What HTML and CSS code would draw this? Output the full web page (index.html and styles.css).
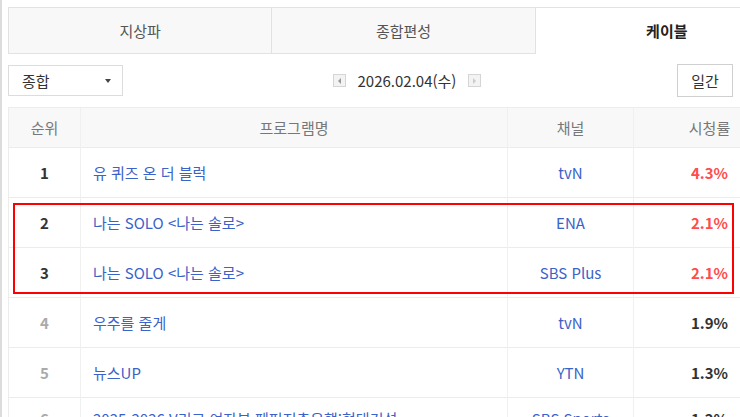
FILE: index.html
```html
<!DOCTYPE html>
<html lang="ko">

<head>
    <meta charset="UTF-8">
    <meta name="viewport" content="width=device-width, initial-scale=1.0">
    <title>시청률 순위</title>

    <link rel="stylesheet" href="styles.css">
</head>

<body>

    <div class="page">
        <!-- Broadcast type tabs -->
        <ul class="tabs">
            <li class="tab">지상파</li>
            <li class="tab">종합편성</li>
            <li class="tab active">케이블</li>
        </ul>

        <!-- Filter / date controls -->
        <div class="controls">
            <div class="select-box">
                <span>종합</span>
                <span class="caret"></span>
            </div>
            <div class="date-nav">
                <span class="nav-btn prev"></span>
                <span class="date">2026.02.04(수)</span>
                <span class="nav-btn next"></span>
            </div>
            <div class="period">
                <button class="period-btn">일간</button>
            </div>
        </div>

        <!-- Ratings table -->
        <div class="table-wrap">
            <table class="ratings">
                <colgroup>
                    <col class="c-rank">
                    <col class="c-prog">
                    <col class="c-chan">
                    <col class="c-rate">
                </colgroup>
                <thead>
                    <tr>
                        <th>순위</th>
                        <th>프로그램명</th>
                        <th>채널</th>
                        <th class="rate">시청률</th>
                    </tr>
                </thead>
                <tbody>
                    <tr class="top">
                        <td class="rank">1</td>
                        <td class="prog"><a href="#">유 퀴즈 온 더 블럭</a></td>
                        <td class="chan"><a href="#">tvN</a></td>
                        <td class="rate">4.3%</td>
                    </tr>
                    <tr class="top">
                        <td class="rank">2</td>
                        <td class="prog"><a href="#">나는 SOLO &lt;나는 솔로&gt;</a></td>
                        <td class="chan"><a href="#">ENA</a></td>
                        <td class="rate">2.1%</td>
                    </tr>
                    <tr class="top">
                        <td class="rank">3</td>
                        <td class="prog"><a href="#">나는 SOLO &lt;나는 솔로&gt;</a></td>
                        <td class="chan"><a href="#">SBS Plus</a></td>
                        <td class="rate">2.1%</td>
                    </tr>
                    <tr>
                        <td class="rank">4</td>
                        <td class="prog"><a href="#">우주를 줄게</a></td>
                        <td class="chan"><a href="#">tvN</a></td>
                        <td class="rate">1.9%</td>
                    </tr>
                    <tr>
                        <td class="rank">5</td>
                        <td class="prog"><a href="#">뉴스UP</a></td>
                        <td class="chan"><a href="#">YTN</a></td>
                        <td class="rate">1.3%</td>
                    </tr>
                    <tr class="last">
                        <td class="rank">6</td>
                        <td class="prog"><a href="#">2025-2026 V리그 여자부 페퍼저축은행:현대건설</a></td>
                        <td class="chan"><a href="#">SBS Sports</a></td>
                        <td class="rate">1.2%</td>
                    </tr>
                </tbody>
            </table>

            <!-- highlight annotation -->
            <div class="highlight"></div>
        </div>
    </div>

</body>

</html>
```

FILE: styles.css
```css
* {
    margin: 0;
    padding: 0;
    box-sizing: border-box;
}

html, body {
    width: 100%;
    height: 100%;
    overflow: hidden;
    background-color: #fff;
    font-family: "Noto Sans CJK KR", "Noto Sans", sans-serif;
    font-size: 15px;
    color: #333;
}

body {
    border-left: 2px solid #dcdcdc;
}

.page {
    width: 791px;
    margin-left: 6px;
    padding-top: 7px;
}

/* Tabs */
.tabs {
    display: flex;
    list-style: none;
}

.tab {
    flex: 1;
    height: 47px;
    line-height: 45px;
    text-align: center;
    color: #555;
    background-color: #f8f8f8;
    border: 1px solid #e2e2e2;
    border-left: none;
}

.tab:first-child {
    border-left: 1px solid #e2e2e2;
}

.tab.active {
    background-color: #fff;
    border-bottom-color: #fff;
    font-weight: bold;
    color: #222;
}

/* Controls */
.controls {
    display: grid;
    grid-template-columns: 1fr auto 1fr;
    align-items: center;
    margin-top: 10px;
    height: 33px;
}

.select-box {
    width: 115px;
    height: 31px;
    border: 1px solid #dcdcdc;
    display: flex;
    justify-content: space-between;
    align-items: center;
    padding: 0 11px 0 13px;
    color: #333;
}

.caret {
    width: 0;
    height: 0;
    border-left: 3px solid transparent;
    border-right: 3px solid transparent;
    border-top: 4px solid #444;
}

.date-nav {
    display: flex;
    align-items: center;
    gap: 12px;
    margin-left: 7px;
}

.date {
    color: #333;
    line-height: 20px;
}

.nav-btn {
    width: 13px;
    height: 13px;
    border: 1px solid #d5d5d5;
    background-color: #f3f3f3;
    display: flex;
    align-items: center;
    justify-content: center;
}

.nav-btn::after {
    content: "";
    width: 0;
    height: 0;
    border-top: 3px solid transparent;
    border-bottom: 3px solid transparent;
}

.prev::after {
    border-right: 3px solid #999;
}

.next::after {
    border-left: 3px solid #ccc;
}

.period {
    display: flex;
    justify-content: flex-end;
    padding-right: 66px;
}

.period-btn {
    width: 56px;
    height: 33px;
    border: 1px solid #cfcfcf;
    background-color: #fff;
    font-family: inherit;
    font-size: 15px;
    color: #333;
}

/* Table */
.table-wrap {
    position: relative;
    margin-top: 10px;
}

.ratings {
    width: 100%;
    border-collapse: collapse;
    table-layout: fixed;
}

.c-rank { width: 72px; }
.c-prog { width: 427px; }
.c-chan { width: 126px; }

th, td {
    border-top: 1px solid #ececec;
    border-left: 1px solid #f0f0f0;
    text-align: center;
    white-space: nowrap;
    overflow: hidden;
}

th:first-child, td:first-child {
    border-left: 1px solid #ececec;
}

th {
    height: 40px;
    background-color: #f8f8f8;
    font-weight: normal;
    color: #777;
}

td {
    height: 50px;
}

th.rate, td.rate {
    padding-right: 14px;
}

.rank {
    font-weight: bold;
    color: #aaa;
}

.top .rank {
    color: #333;
}

.prog {
    text-align: left;
    padding-left: 12px;
}

a {
    color: #3a62c9;
    text-decoration: none;
}

td.rate {
    font-weight: bold;
    color: #333;
}

.top td.rate {
    color: #ff4c4c;
}

/* last row only peeks in at the bottom edge */
.last td {
    vertical-align: top;
    padding-top: 10px;
}

.last td.rate {
    padding-right: 14px;
}

/* Annotation box */
.highlight {
    position: absolute;
    left: 5px;
    top: 96px;
    width: 721px;
    height: 91px;
    border: 2px solid #f00;
    pointer-events: none;
}
```
